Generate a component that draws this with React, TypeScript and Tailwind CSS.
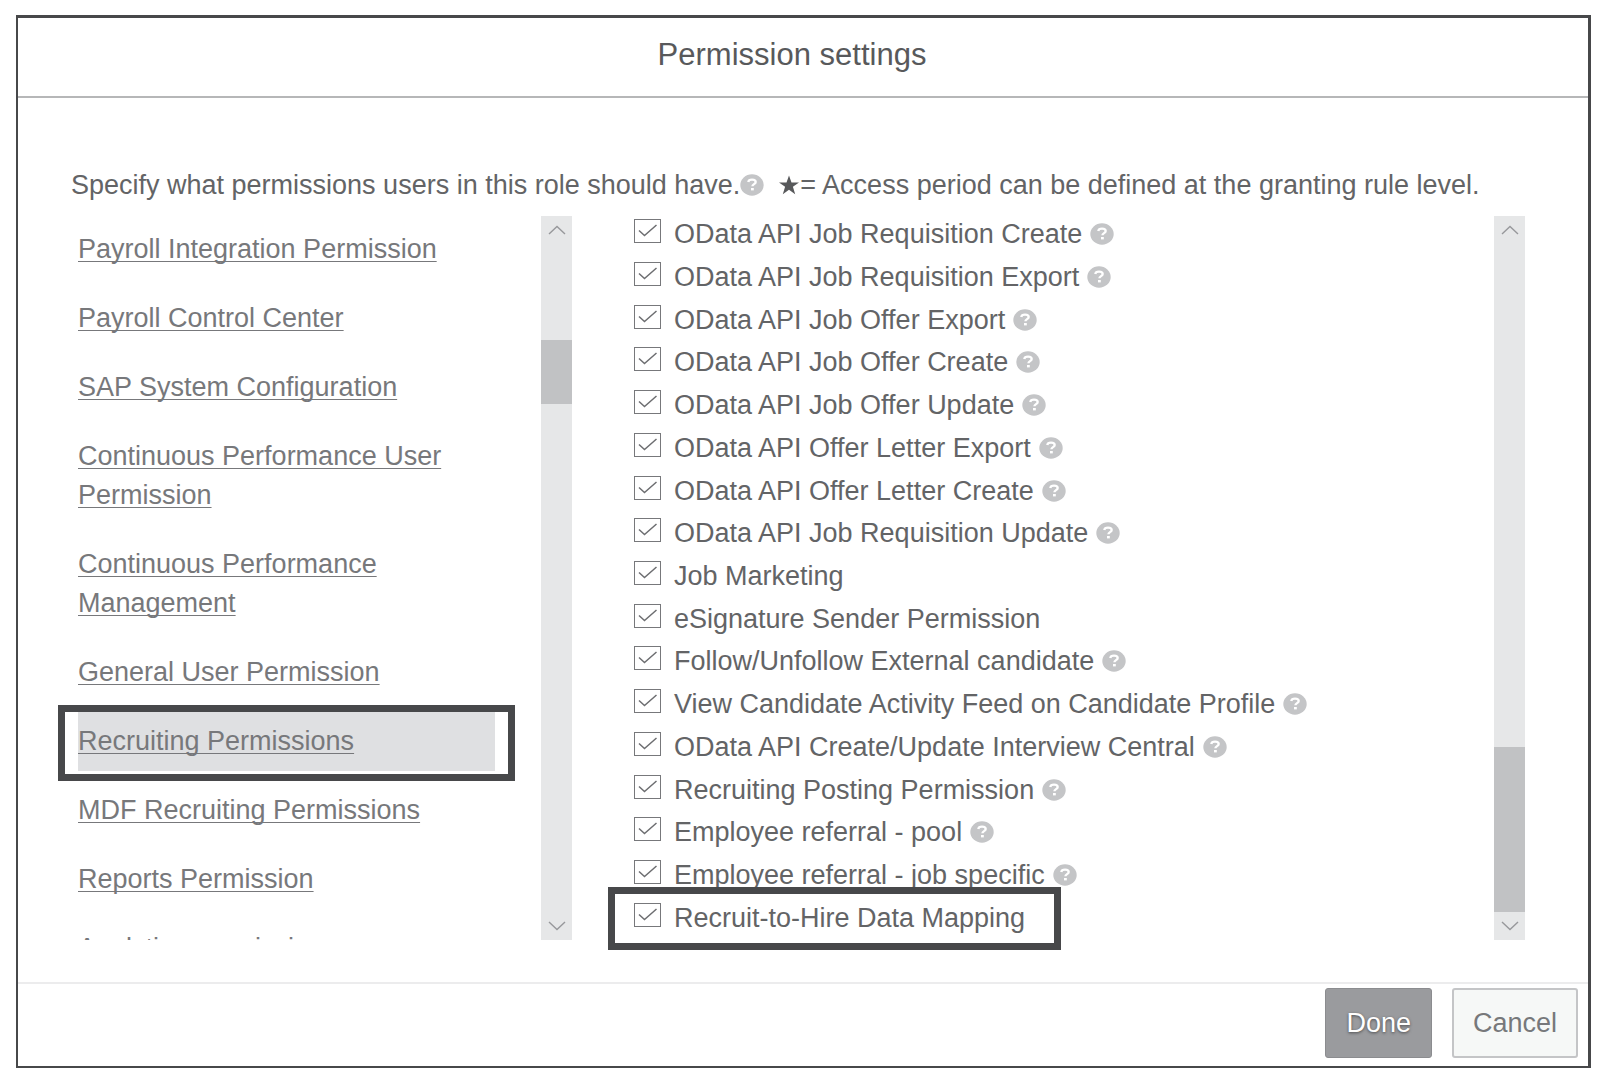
const roleSections = [
  { name: "Payroll Integration Permission" },
  { name: "Payroll Control Center" },
  { name: "SAP System Configuration" },
  { name: "Continuous Performance User Permission" },
  { name: "Continuous Performance Management" },
  { name: "General User Permission" },
  { name: "Recruiting Permissions", active: true },
  { name: "MDF Recruiting Permissions" },
  { name: "Reports Permission" },
  { name: "Analytics permission" },
]

const permissions = [
  { name: "OData API Job Requisition Create", help: true },
  { name: "OData API Job Requisition Export", help: true },
  { name: "OData API Job Offer Export", help: true },
  { name: "OData API Job Offer Create", help: true },
  { name: "OData API Job Offer Update", help: true },
  { name: "OData API Offer Letter Export", help: true },
  { name: "OData API Offer Letter Create", help: true },
  { name: "OData API Job Requisition Update", help: true },
  { name: "Job Marketing" },
  { name: "eSignature Sender Permission" },
  { name: "Follow/Unfollow External candidate", help: true },
  { name: "View Candidate Activity Feed on Candidate Profile", help: true },
  { name: "OData API Create/Update Interview Central", help: true },
  { name: "Recruiting Posting Permission", help: true },
  { name: "Employee referral - pool", help: true },
  { name: "Employee referral - job specific", help: true },
  { name: "Recruit-to-Hire Data Mapping", highlighted: true },
]

function HelpIcon() {
  return (
    <svg className="h-[22px] w-6 shrink-0" viewBox="0 0 24 22" fill="none" aria-hidden="true">
      <ellipse cx="12" cy="11" rx="11.7" ry="10.7" fill="#c4c5c7" />
      <path
        d="M8.2 8C8.500 6.300 10 5.600 12 5.600c2.300 0 3.700 0.900 3.700 2.400 0 2.200-3.300 2.100-3.300 4.300"
        stroke="#fff"
        strokeWidth="2.300"
      />
      <rect x="11" y="14" width="2.800" height="2.400" fill="#fff" />
    </svg>
  )
}

function Star() {
  return (
    <svg className="h-5 w-[22px] shrink-0" viewBox="0 0 22 20" aria-hidden="true">
      <path
        d="M11 0.500l2.500 7H21l-6.100 4.300 2.300 7.400-6.200-4.500-6.200 4.500 2.300-7.400L1 7.500h7.500z"
        fill="#58595b"
      />
    </svg>
  )
}

function Chevron({ down = false }: { down?: boolean }) {
  return (
    <svg className="h-2.5 w-[18px]" viewBox="0 0 18 10" fill="none" aria-hidden="true">
      <path d={down ? "M1 1l8 7.500L17 1" : "M1 9l8-7.500L17 9"} stroke="#97989b" strokeWidth="1.400" />
    </svg>
  )
}

// start and size are shares of the track between the two arrows
function ScrollTrack({ start, size }: { start: number; size: number }) {
  return (
    <div className="flex w-[31px] shrink-0 flex-col bg-[#e6e7e8]" aria-hidden="true">
      <div className="flex h-7 items-center justify-center">
        <Chevron />
      </div>
      <div className="flex flex-1 flex-col">
        <div style={{ flexGrow: start }} />
        <div className="bg-[#c1c2c4]" style={{ flexGrow: size }} />
        <div style={{ flexGrow: 100 - start - size }} />
      </div>
      <div className="flex h-7 items-center justify-center">
        <Chevron down />
      </div>
    </div>
  )
}

function PermissionRow({ name, help, highlighted }: { name: string; help?: boolean; highlighted?: boolean }) {
  return (
    <li className="relative flex w-fit items-center pb-1.5 leading-9">
      {highlighted && (
        <div className="pointer-events-none absolute -top-3 -right-9 -bottom-2 -left-[26px] border-[7px] border-[#47484a]" />
      )}
      <label className="flex items-center gap-[13px]">
        <span className="mb-1.5 grid">
          <input
            type="checkbox"
            defaultChecked
            className="peer col-start-1 row-start-1 h-6 w-[27px] appearance-none border border-[#77787b]"
          />
          <svg
            className="pointer-events-none invisible col-start-1 row-start-1 h-6 w-[27px] peer-checked:visible"
            viewBox="0 0 27 24"
            fill="none"
            aria-hidden="true"
          >
            <path d="M5 11.500l5.500 5L22.500 6" stroke="#6d6e71" strokeWidth="1.500" />
          </svg>
        </span>
        <span className="whitespace-nowrap">{name}</span>
      </label>
      {help && (
        <span className="ml-2">
          <HelpIcon />
        </span>
      )}
    </li>
  )
}

export default function App() {
  return (
    <div className="min-h-screen bg-white pt-[15px] pr-3.5 pl-4 font-['Liberation_Sans',Arial,sans-serif] text-[27px] text-[#636466]">
      <main className="border-2 border-t-3 border-r-3 border-[#47484a]">
        <header className="border-b-2 border-[#b6b7b8] pr-[22px]">
          <h1 className="pt-3.5 pb-[18px] text-center text-[31px] leading-[46px] text-[#58595b]">
            Permission settings
          </h1>
        </header>

        <div className="pt-[69px] pr-[63px] pb-[42px] pl-10">
          <p className="flex items-center pb-[13px] pl-[13px] leading-9 whitespace-nowrap">
            Specify what permissions users in this role should have.
            <HelpIcon />
            <span className="ml-3.5 flex items-center">
              <Star />
              = Access period can be defined at the granting rule level.
            </span>
          </p>

          <div className="flex h-[724px]">
            <nav className="flex-1 overflow-hidden pt-1 pr-[26px] pl-5" aria-label="Permission groups">
              <ul className="flex flex-col gap-2.5 pr-5">
                {roleSections.map((section) => (
                  <li
                    key={section.name}
                    className={section.active ? "relative bg-[#dfe0e2] py-2.5" : "py-2.5"}
                  >
                    {section.active && (
                      <div className="pointer-events-none absolute -inset-x-5 -top-[7px] -bottom-2.5 border-[7px] border-[#47484a]" />
                    )}
                    <a
                      href="#"
                      className="block leading-[39px] text-[#77787b] underline decoration-1 underline-offset-3 [text-decoration-skip-ink:none]"
                    >
                      {section.name}
                    </a>
                  </li>
                ))}
              </ul>
            </nav>
            <ScrollTrack start={14.3} size={9.7} />
            <ul className="-mb-0.5 ml-[62px] grid w-[860px] auto-rows-fr">
              {permissions.map((permission) => (
                <PermissionRow key={permission.name} {...permission} />
              ))}
            </ul>
            <ScrollTrack start={75.3} size={24.7} />
          </div>
        </div>

        <footer className="flex justify-end gap-5 border-t-2 border-[#ececed] pt-1 pr-2.5 pb-2">
          <button
            type="button"
            className="h-[70px] rounded-[3px] border border-[#8b8c8f] bg-[#9a9b9e] px-5 text-white [text-shadow:0_1px_3px_#47484a]"
          >
            Done
          </button>
          <button
            type="button"
            className="h-[70px] rounded-[3px] border-2 border-[#c4c5c7] bg-[#f6f8f7] px-[19px] text-[#77787b]"
          >
            Cancel
          </button>
        </footer>
      </main>
    </div>
  )
}
